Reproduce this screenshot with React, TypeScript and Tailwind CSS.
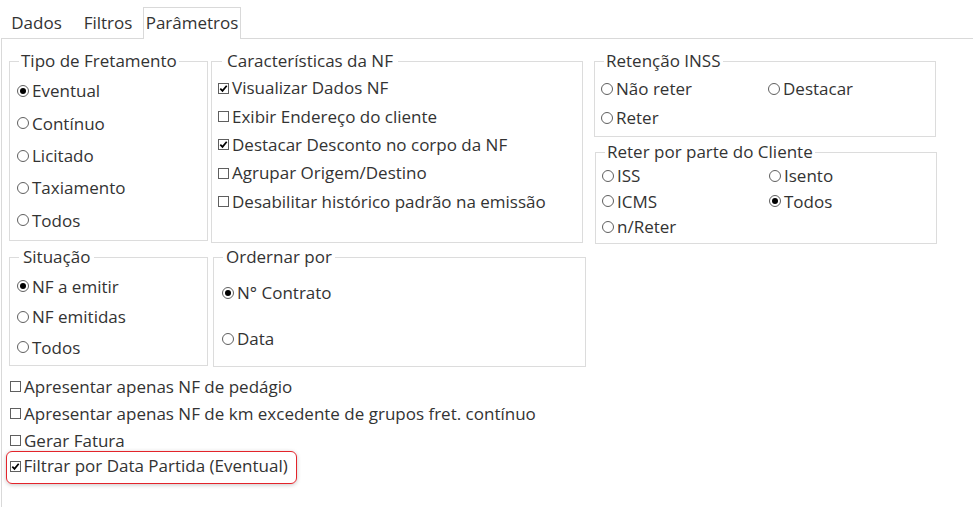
import { ReactNode } from "react";

function Radio({ label, checked = false }: { label: string; checked?: boolean }) {
  return (
    <div className="flex items-center gap-[3px] whitespace-nowrap">
      <span className="w-[12px] h-[12px] shrink-0 rounded-full border border-[#5f5f5f] bg-white flex items-center justify-center">
        {checked && <span className="w-[6px] h-[6px] rounded-full bg-black" />}
      </span>
      <span>{label}</span>
    </div>
  );
}

function Check({ label, checked = false }: { label: string; checked?: boolean }) {
  return (
    <div className="flex items-center gap-[3px] whitespace-nowrap">
      <span className="w-[11px] h-[11px] shrink-0 border border-[#5f5f5f] bg-white flex items-center justify-center">
        {checked && (
          <svg width="9" height="9" viewBox="0 0 9 9">
            <path d="M1.3 4.6 L3.5 6.9 L7.7 1.7" fill="none" stroke="#000" strokeWidth="1.7" />
          </svg>
        )}
      </span>
      <span>{label}</span>
    </div>
  );
}

function Group({
  title,
  legend,
  className,
  children,
}: {
  title: string;
  legend: string;
  className: string;
  children: ReactNode;
}) {
  return (
    <fieldset className={`border border-[#dcdcdc] p-0 m-0 min-w-0 ${className}`}>
      <legend className={`leading-[22px] ${legend}`}>{title}</legend>
      {children}
    </fieldset>
  );
}

export default function App() {
  return (
    <div className="w-[973px] h-[507px] overflow-hidden bg-white text-[#333] text-[17px] font-['Open_Sans','Noto_Sans',sans-serif]">
      {/* tabs */}
      <div className="flex items-end h-[38px]">
        <div className="w-[73px] h-[31px] flex items-center justify-center">Dados</div>
        <div className="w-[70px] h-[31px] flex items-center justify-center">Filtros</div>
        <div className="w-[98px] h-[32px] -mb-px pb-px flex items-center justify-center border border-b-0 border-[#d9d9d9] bg-white relative">
          Parâmetros
        </div>
      </div>

      <div className="h-[469px] ml-px border-t border-l border-[#d9d9d9] pt-[11px] pl-[7px]">
        {/* top row */}
        <div className="flex items-start h-[196px]">
          <Group title="Tipo de Fretamento" legend="ml-[9px] px-[2px]" className="w-[199px] h-[191px]">
            <div className="pt-[3px] pl-[7px] flex flex-col">
              <div className="h-[32.3px] flex items-center"><Radio label="Eventual" checked /></div>
              <div className="h-[32.3px] flex items-center"><Radio label="Contínuo" /></div>
              <div className="h-[32.3px] flex items-center"><Radio label="Licitado" /></div>
              <div className="h-[32.3px] flex items-center"><Radio label="Taxiamento" /></div>
              <div className="h-[32.3px] flex items-center"><Radio label="Todos" /></div>
            </div>
          </Group>

          <Group title="Características da NF" legend="ml-[10px] px-[5px]" className="ml-[3px] w-[372px] h-[193px]">
            <div className="pt-[2px] pl-[6px] flex flex-col">
              <div className="h-[28.3px] flex items-center"><Check label="Visualizar Dados NF" checked /></div>
              <div className="h-[28.3px] flex items-center"><Check label="Exibir Endereço do cliente" /></div>
              <div className="h-[28.3px] flex items-center"><Check label="Destacar Desconto no corpo da NF" checked /></div>
              <div className="h-[28.3px] flex items-center"><Check label="Agrupar Origem/Destino" /></div>
              <div className="h-[28.3px] flex items-center"><Check label="Desabilitar histórico padrão na emissão" /></div>
            </div>
          </Group>

          <div className="ml-[11px] w-[342px] flex flex-col">
            <Group title="Retenção INSS" legend="ml-[9px] px-[2px]" className="w-[342px] h-[87px]">
              <div className="pt-[2px] pl-[6px] grid grid-cols-[167px_1fr]">
                <div className="h-[29px] flex items-center"><Radio label="Não reter" /></div>
                <div className="h-[29px] flex items-center"><Radio label="Destacar" /></div>
                <div className="h-[29px] flex items-center"><Radio label="Reter" /></div>
              </div>
            </Group>
            <Group title="Reter por parte do Cliente" legend="ml-[9px] px-[2px]" className="mt-[4px] ml-px w-[342px] h-[103px]">
              <div className="pl-[6px] grid grid-cols-[167px_1fr]">
                <div className="h-[25.5px] flex items-center"><Radio label="ISS" /></div>
                <div className="h-[25.5px] flex items-center"><Radio label="Isento" /></div>
                <div className="h-[25.5px] flex items-center"><Radio label="ICMS" /></div>
                <div className="h-[25.5px] flex items-center"><Radio label="Todos" checked /></div>
                <div className="h-[25.5px] flex items-center"><Radio label="n/Reter" /></div>
              </div>
            </Group>
          </div>
        </div>

        {/* second row */}
        <div className="flex items-start">
          <Group title="Situação" legend="ml-[9px] px-[4px]" className="w-[199px] h-[120px]">
            <div className="pt-[3px] pl-[7px] flex flex-col">
              <div className="h-[30.5px] flex items-center"><Radio label="NF a emitir" checked /></div>
              <div className="h-[30.5px] flex items-center"><Radio label="NF emitidas" /></div>
              <div className="h-[30.5px] flex items-center"><Radio label="Todos" /></div>
            </div>
          </Group>
          <Group title="Ordernar por" legend="ml-[9px] px-[3px]" className="ml-[5px] w-[373px] h-[121px]">
            <div className="pt-[2px] pl-[8px] flex flex-col">
              <div className="h-[46px] flex items-center"><Radio label="N° Contrato" checked /></div>
              <div className="h-[46px] flex items-center"><Radio label="Data" /></div>
            </div>
          </Group>
        </div>

        {/* bottom options */}
        <div className="mt-[6px] pl-[1px] flex flex-col">
          <div className="h-[27px] flex items-center"><Check label="Apresentar apenas NF de pedágio" /></div>
          <div className="h-[27px] flex items-center"><Check label="Apresentar apenas NF de km excedente de grupos fret. contínuo" /></div>
          <div className="h-[27px] flex items-center"><Check label="Gerar Fatura" /></div>
          <div className="-mt-[3px] -ml-[4px] w-[291px] h-[33px] pb-[3px] pl-[2.5px] flex items-center border-[1.5px] border-[#e3242b] rounded-[6px] shadow-[0_1px_4px_rgba(0,0,0,0.22)]">
            <Check label="Filtrar por Data Partida (Eventual)" checked />
          </div>
        </div>
      </div>
    </div>
  );
}
